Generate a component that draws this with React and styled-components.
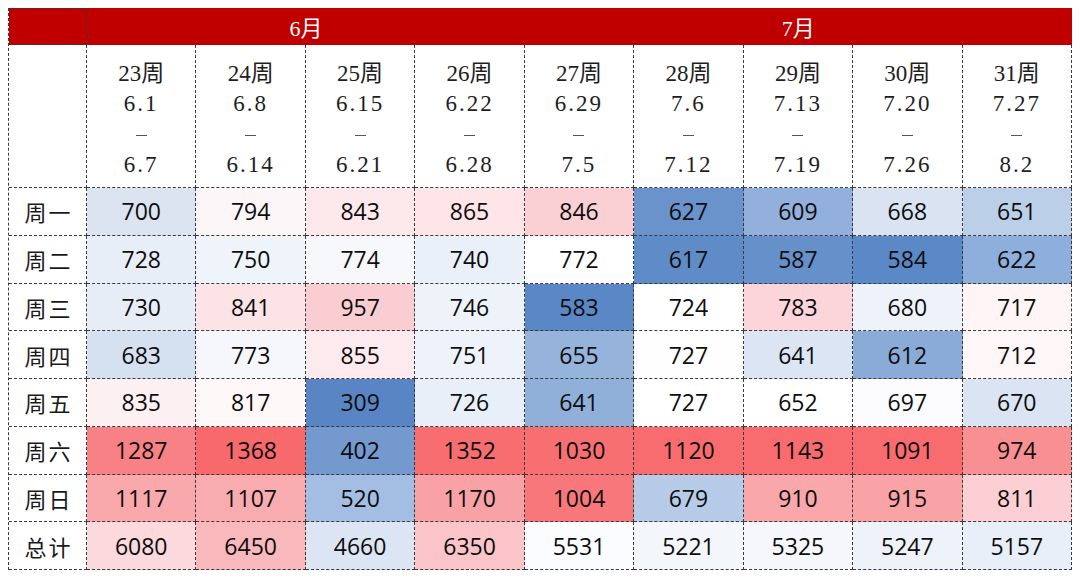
import React from "react";
import styled, { createGlobalStyle } from "styled-components";

const Global = createGlobalStyle`
  html, body { margin: 0; padding: 0; background: #ffffff; }
  body { font-family: "Open Sans", "Noto Sans CJK SC", sans-serif; }
`;

const Page = styled.div`
  padding: 8px;
`;

const Grid = styled.div`
  display: grid;
  width: 1064px;
  grid-template-columns: 78px repeat(9, 1fr);
  grid-template-rows: 37px 143px repeat(8, 47.75px);
  border-left: 1px dashed #3a3a3a;
  box-sizing: border-box;
`;

const Corner = styled.div`
  background: #c00000;
  border-top: 1px dashed #3a3a3a;
  border-right: 1px dashed #3a3a3a;
  border-bottom: 1px dashed #3a3a3a;
  box-sizing: border-box;
`;

const Month = styled.div`
  grid-column: span ${(p) => p.$span};
  background: #c00000;
  color: #ffffff;
  display: flex;
  align-items: center;
  justify-content: center;
  font-family: "Liberation Serif", "Noto Sans CJK SC", serif;
  font-size: 22px;
  padding-bottom: 2px;
  box-sizing: border-box;
`;

const Cell = styled.div`
  border-right: 1px dashed #3a3a3a;
  border-bottom: 1px dashed #3a3a3a;
  box-sizing: border-box;
  background: ${(p) => p.$bg || "#ffffff"};
  display: flex;
  align-items: center;
  justify-content: center;
`;

const WeekCell = styled(Cell)`
  flex-direction: column;
  font-family: "Liberation Serif", "Noto Sans CJK SC", serif;
  font-size: 23px;
  line-height: 30.5px;
  color: #1e1e1e;
  padding-top: 7px;
`;

const DateText = styled.span`
  letter-spacing: 2px;
`;

const Dash = styled.span`
  display: inline-block;
  width: 11px;
  height: 1px;
  margin: 15px 0 14px;
  background: #555;
`;

const Label = styled(Cell)`
  font-family: "Noto Sans CJK SC", sans-serif;
  font-size: 22px;
  color: #1a1a1a;
  letter-spacing: 2px;
  padding-left: 2px;
`;

const Value = styled(Cell)`
  font-family: "Open Sans", "Noto Sans CJK SC", sans-serif;
  font-size: 23px;
  color: #0d0d0d;
`;

const weeks = [
  ["23周", "6.1", "6.7"],
  ["24周", "6.8", "6.14"],
  ["25周", "6.15", "6.21"],
  ["26周", "6.22", "6.28"],
  ["27周", "6.29", "7.5"],
  ["28周", "7.6", "7.12"],
  ["29周", "7.13", "7.19"],
  ["30周", "7.20", "7.26"],
  ["31周", "7.27", "8.2"],
];

const rows = [
  ["周一", [[700, "#dce4f2"], [794, "#fdf6f8"], [843, "#fde8ec"], [865, "#fde5e8"], [846, "#fad0d4"], [627, "#6a93cb"], [609, "#92b0db"], [668, "#d9e3f1"], [651, "#bccfe9"]]],
  ["周二", [[728, "#e8eef8"], [750, "#eff3fa"], [774, "#f6f8fc"], [740, "#e9f0f9"], [772, "#ffffff"], [617, "#5f8bc7"], [587, "#6590ca"], [584, "#5b88c6"], [622, "#8eaedb"]]],
  ["周三", [[730, "#e6edf7"], [841, "#fce3e6"], [957, "#f9cdd1"], [746, "#eef3fa"], [583, "#5a87c5"], [724, "#ffffff"], [783, "#fbd5d9"], [680, "#eef2fa"], [717, "#fff5f6"]]],
  ["周四", [[683, "#d5e0f0"], [773, "#f5f7fc"], [855, "#fdeaee"], [751, "#eef2fa"], [655, "#96b3dc"], [727, "#fefefe"], [641, "#dce5f3"], [612, "#8aaad8"], [712, "#fff6f7"]]],
  ["周五", [[835, "#fdf0f3"], [817, "#fff8f9"], [309, "#5a85c4"], [726, "#e9eff8"], [641, "#90afd9"], [727, "#ffffff"], [652, "#ffffff"], [697, "#fcfbfe"], [670, "#dbe4f2"]]],
  ["周六", [[1287, "#f88185"], [1368, "#f8696b"], [402, "#7399cf"], [1352, "#f86e70"], [1030, "#f86f72"], [1120, "#f86b6e"], [1143, "#f86b6e"], [1091, "#f86c6f"], [974, "#f88f92"]]],
  ["周日", [[1117, "#f9a8ac"], [1107, "#f9acb0"], [520, "#a3bde3"], [1170, "#f9a2a6"], [1004, "#f8777a"], [679, "#b6cbe8"], [910, "#f9a7ab"], [915, "#f9a3a7"], [811, "#fbcfd3"]]],
  ["总计", [[6080, "#fbd9dc"], [6450, "#f9b8bc"], [4660, "#dce5f3"], [6350, "#fac4c8"], [5531, "#fbfcff"], [5221, "#f3f6fb"], [5325, "#f5f7fc"], [5247, "#eef2fa"], [5157, "#e9eff8"]]],
];

export default function App() {
  return (
    <Page>
      <Global />
      <Grid>
        <Corner />
        <Month $span={4}>6月</Month>
        <Month $span={5}>7月</Month>

        <Cell />
        {weeks.map(([w, a, b]) => (
          <WeekCell key={w}>
            <span>{w}</span>
            <DateText>{a}</DateText>
            <Dash />
            <DateText>{b}</DateText>
          </WeekCell>
        ))}

        {rows.map(([label, cells]) => (
          <React.Fragment key={label}>
            <Label>{label}</Label>
            {cells.map(([v, bg], i) => (
              <Value key={i} $bg={bg}>
                {v}
              </Value>
            ))}
          </React.Fragment>
        ))}
      </Grid>
    </Page>
  );
}
